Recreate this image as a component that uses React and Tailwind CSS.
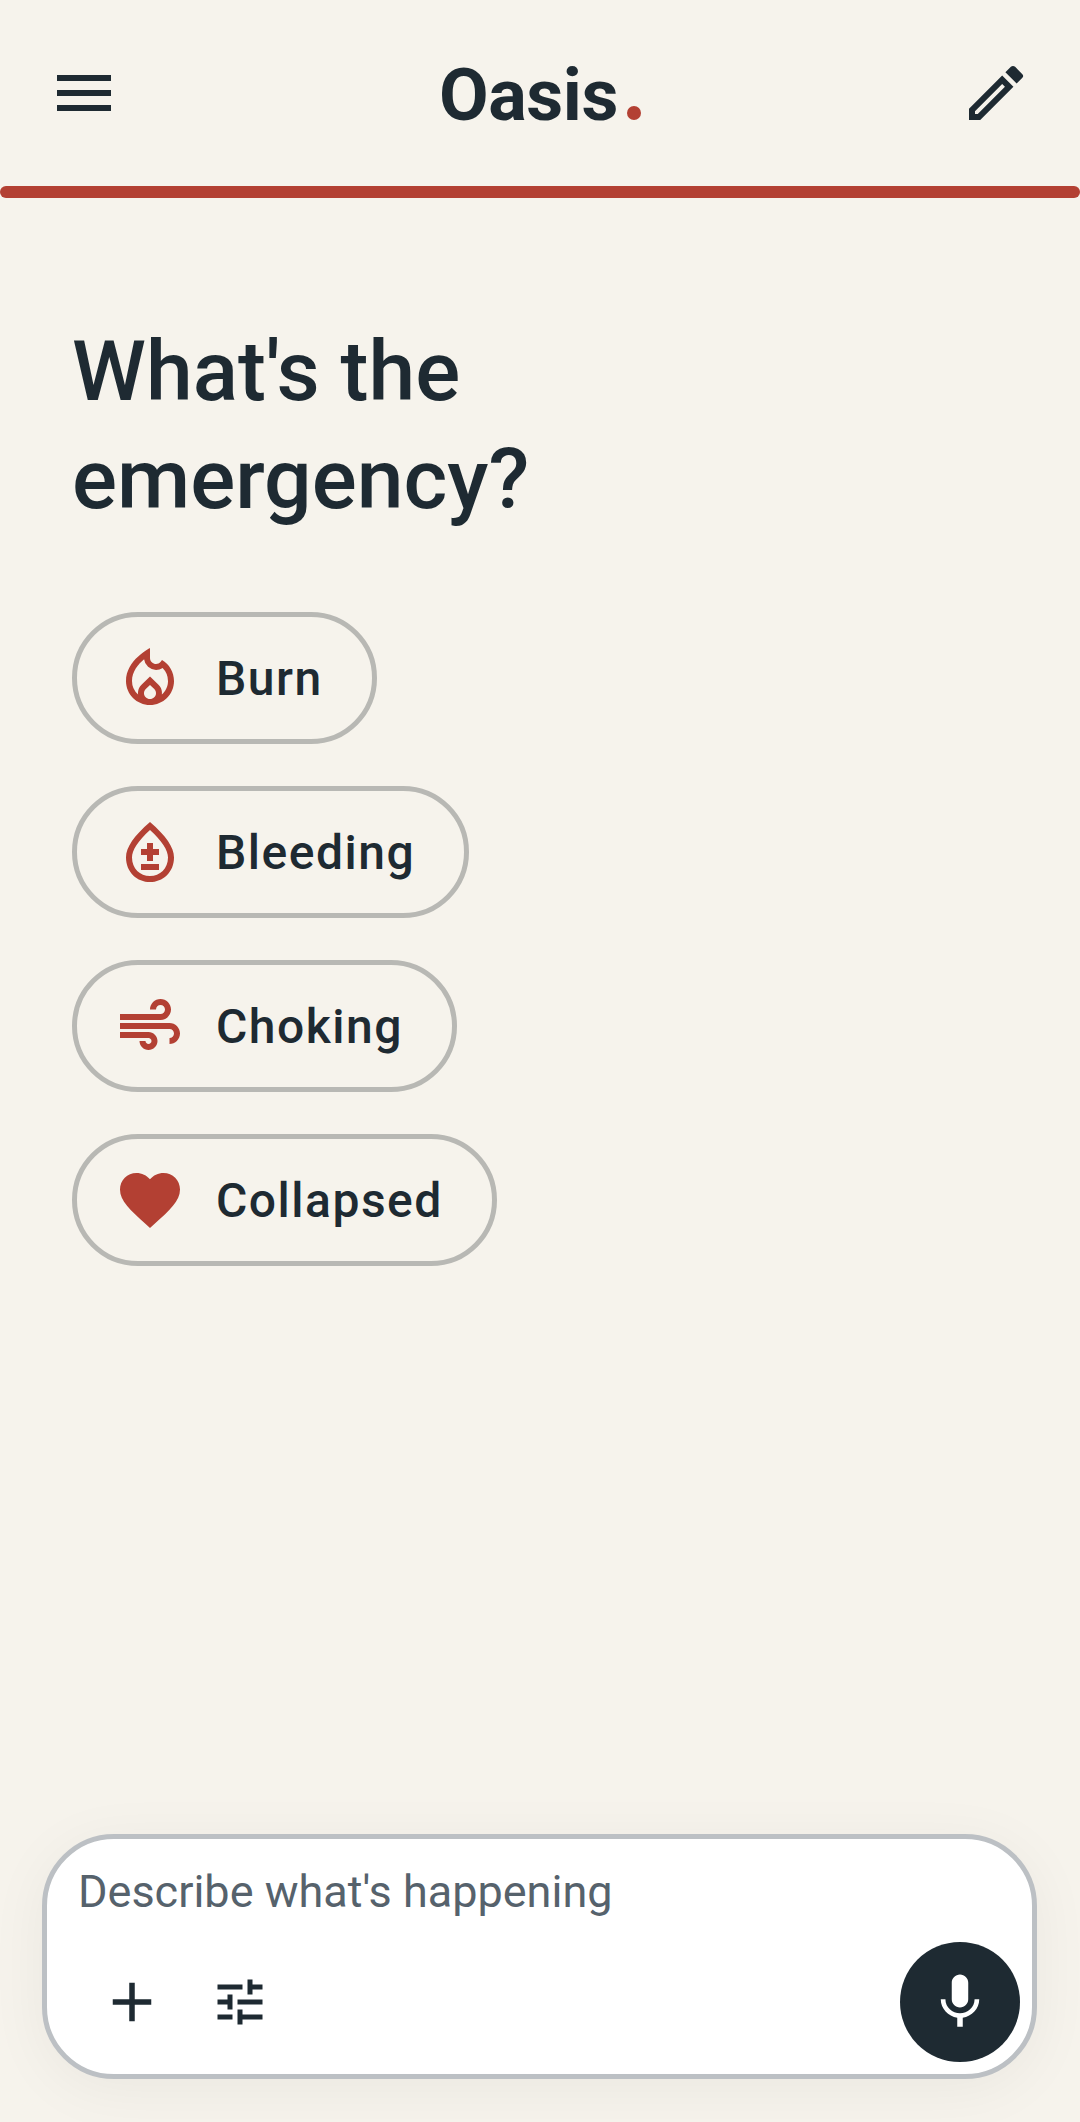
import { MdMenu, MdOutlineEdit, MdAdd, MdTune, MdMic, MdAir, MdFavorite, MdOutlineLocalFireDepartment, MdOutlineBloodtype } from 'react-icons/md';

const chips = [
  { label: 'Burn', Icon: MdOutlineLocalFireDepartment },
  { label: 'Bleeding', Icon: MdOutlineBloodtype },
  { label: 'Choking', Icon: MdAir },
  { label: 'Collapsed', Icon: MdFavorite },
];

const App = () => {
  return (
    <div className="flex h-[2122px] w-[1080px] flex-col overflow-hidden bg-[#f6f3ec] font-['Roboto',sans-serif] text-[#1e2a32]">
      <header className="flex h-[186px] items-start justify-between px-[48px] pt-[57px]">
        <MdMenu size={72} />
        <div className="flex items-baseline">
          <h1 className="text-[72px] font-bold leading-[78px] tracking-[-0.4px]">Oasis</h1>
          <span className="mb-[4px] ml-[9px] inline-block h-[14px] w-[14px] rounded-full bg-[#b34033]" />
        </div>
        <MdOutlineEdit size={72} />
      </header>
      <div className="h-[12px] rounded-full bg-[#b34033]" />

      <main className="flex flex-1 flex-col items-start px-[72px] pt-[120px]">
        <h2 className="w-[600px] text-[84px] font-medium leading-[108px]">What's the emergency?</h2>
        <div className="mt-[78px] flex flex-col items-start gap-[42px]">
          {chips.map(({ label, Icon }) => (
            <button
              key={label}
              className="flex h-[132px] items-center gap-[30px] rounded-full border-[5px] border-[#b8b8b4] pl-[37px] pr-[49px]"
            >
              <Icon size={72} className="text-[#b34033]" />
              <span className="pt-[2px] text-[48px] font-medium tracking-[1.5px]">{label}</span>
            </button>
          ))}
        </div>
      </main>

      <div className="pb-[43px] pl-[42px] pr-[43px]">
        <div className="flex h-[245px] flex-col rounded-[72px] border-[5px] border-[#bcc0c4] bg-white shadow-[0_10px_60px_rgba(0,0,0,0.05)]">
          <p className="pl-[31px] pt-[26px] text-[45px] leading-[54px] text-[#56626c]">Describe what's happening</p>
          <div className="mt-auto flex items-center pb-[12px] pl-[52px] pr-[12px]">
            <MdAdd size={66} />
            <MdTune size={60} className="ml-[45px]" />
            <button className="ml-auto flex h-[120px] w-[120px] items-center justify-center rounded-full bg-[#1e2a32] text-white">
              <MdMic size={66} />
            </button>
          </div>
        </div>
      </div>
    </div>
  );
};

export default App;
